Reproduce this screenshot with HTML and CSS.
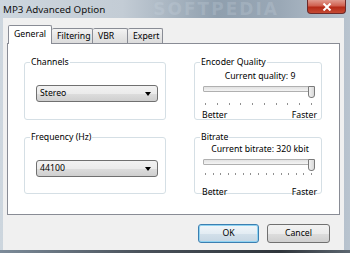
FILE: index.html
```html
<!DOCTYPE html>
<html lang="en">
<head>
  <meta charset="UTF-8">
  <title>MP3 Advanced Option</title>
  <link rel="stylesheet" href="styles.css">
</head>
<body>
  <div class="window">
    <div class="titlebar">
      <span class="title">MP3 Advanced Option</span>
      <span class="watermark">SOFTPEDIA</span>
      <div class="close-btn">
        <svg viewBox="0 0 10 8" width="10" height="8">
          <path d="M1.5 0.5 L8.5 7.5 M8.5 0.5 L1.5 7.5" stroke="#fff" stroke-width="2"/>
        </svg>
      </div>
    </div>

    <div class="client">
      <div class="tabs">
        <div class="tab active">General</div>
        <div class="tab">Filtering</div>
        <div class="tab">VBR</div>
        <div class="tab">Expert</div>
      </div>

      <div class="panel">
        <fieldset class="group">
          <legend>Channels</legend>
          <div class="select">
            <span>Stereo</span>
            <span class="arrow"></span>
          </div>
        </fieldset>

        <fieldset class="group">
          <legend>Encoder Quality</legend>
          <div class="slider-caption">Current quality: 9</div>
          <div class="slider">
            <div class="track"></div>
            <div class="thumb"></div>
          </div>
          <div class="ticks">
            <i></i><i></i><i></i><i></i><i></i><i></i><i></i><i></i><i></i><i></i>
          </div>
          <div class="slider-labels">
            <span>Better</span>
            <span>Faster</span>
          </div>
        </fieldset>

        <fieldset class="group">
          <legend>Frequency (Hz)</legend>
          <div class="select">
            <span>44100</span>
            <span class="arrow"></span>
          </div>
        </fieldset>

        <fieldset class="group bitrate">
          <legend>Bitrate</legend>
          <div class="slider-caption">Current bitrate: 320 kbit</div>
          <div class="slider">
            <div class="track"></div>
            <div class="thumb"></div>
          </div>
          <div class="ticks">
            <i></i><i></i><i></i><i></i><i></i><i></i><i></i><i></i><i></i><i></i><i></i><i></i><i></i><i></i><i></i>
          </div>
          <div class="slider-labels">
            <span>Better</span>
            <span>Faster</span>
          </div>
        </fieldset>
      </div>

      <div class="buttons">
        <div class="button default">OK</div>
        <div class="button">Cancel</div>
      </div>
    </div>
  </div>
</body>
</html>
```

FILE: styles.css
```css
* {
  margin: 0;
  padding: 0;
  box-sizing: border-box;
}

body {
  width: 350px;
  height: 253px;
  overflow: hidden;
  font-family: "Noto Sans", "Open Sans", sans-serif;
  font-size: 8.7px;
  color: #000;
}

.window {
  height: 253px;
  display: flex;
  flex-direction: column;
  background: linear-gradient(to right, #cdd6de 0%, #c3ccd5 35%, #8f9fae 62%, #9aa8b6 80%, #b9c4cf 100%);
}

/* bottom strip of the frame is darker */
.window::after {
  content: '';
  height: 3px;
  background: linear-gradient(to right, #7c8b99, #4a525b 40%, #2f353b 80%, #5c6670);
}

.titlebar {
  height: 18px;
  display: flex;
  align-items: flex-start;
  padding-left: 3px;
}

.title {
  font-size: 9.8px;
  line-height: 19px;
  color: #111;
}

.watermark {
  margin-left: 48px;
  font-family: "DejaVu Sans", sans-serif;
  font-weight: bold;
  font-size: 17px;
  line-height: 18px;
  letter-spacing: 2px;
  color: rgba(210, 220, 230, 0.22);
}

.close-btn {
  margin-left: auto;
  margin-right: 4px;
  width: 39px;
  height: 14px;
  border: 1px solid #6b2a2a;
  border-top: none;
  border-radius: 0 0 4px 4px;
  background: linear-gradient(to bottom, #e09a8e 0%, #d0604f 45%, #b52a17 55%, #c54a34 100%);
  display: flex;
  justify-content: center;
  align-items: center;
}

.client {
  flex: 1;
  margin: 0 6px 0 3px;
  background: #f0f0f0;
  display: flex;
  flex-direction: column;
}

.tabs {
  height: 25px;
  display: flex;
  align-items: flex-end;
  padding-left: 5px;
}

.tab {
  height: 15px;
  padding: 0 5px;
  line-height: 14px;
  border: 1px solid #898c95;
  border-bottom: none;
  border-left: none;
  background: linear-gradient(to bottom, #f3f3f3, #e6e6e6 50%, #dcdcdc);
  border-radius: 2px 2px 0 0;
}

.tab:nth-child(2) { width: 41px; }
.tab:nth-child(3) { width: 35px; }
.tab:nth-child(4) { width: 35px; }

.tab.active {
  width: 44px;
  height: 19px;
  margin-bottom: -1px;
  line-height: 17px;
  border-left: 1px solid #898c95;
  background: #fff;
  position: relative;
  z-index: 1;
}

.panel {
  height: 172px;
  margin: 0 4px;
  border: 1px solid #898c95;
  background: #fff;
  display: grid;
  grid-template-columns: 142px 128px;
  grid-template-rows: 64px 63px;
  column-gap: 28px;
  row-gap: 11px;
  padding: 12px 0 0 16px;
}

.group {
  border: 1px solid #d5dfe5;
  border-radius: 3px;
  padding: 0 7px 0 11px;
  min-width: 0;
}

.group legend {
  margin-left: -6px;
  padding: 0 1px;
  line-height: 13px;
}

.select {
  height: 17px;
  margin-top: 16px;
  border: 1px solid #707070;
  border-radius: 3px;
  background: linear-gradient(to bottom, #f2f2f2 0%, #ebebeb 50%, #dddddd 51%, #cfcfcf 100%);
  display: flex;
  align-items: center;
  justify-content: space-between;
  padding: 0 6px 0 3px;
  line-height: 15px;
}

.arrow {
  width: 0;
  height: 0;
  border-left: 3.5px solid transparent;
  border-right: 3.5px solid transparent;
  border-top: 4px solid #000;
}

.slider-caption {
  margin-top: 1px;
  text-align: center;
  line-height: 13px;
}

.slider {
  position: relative;
  height: 13px;
  margin-left: -3px;
  margin-right: -1px;
}

.track {
  margin-top: 3px;
  height: 6px;
  border: 1px solid #b0b0b0;
  border-radius: 1px;
  background: linear-gradient(to bottom, #e2e2e2, #f4f4f4);
}

.thumb {
  position: absolute;
  right: 0;
  top: 0;
  width: 7px;
  height: 12px;
  border: 1px solid #7a7a7a;
  border-radius: 1px 1px 3px 3px;
  background: linear-gradient(to right, #f2f2f2, #d8d8d8);
}

.ticks {
  display: flex;
  justify-content: space-between;
  margin: 4px 2px 0 -1px;
  height: 2px;
}

.ticks i {
  width: 1px;
  height: 2px;
  background: #909090;
}

.slider-labels {
  display: flex;
  justify-content: space-between;
  margin: 4px -3px 0 -4px;
  line-height: 12px;
}

.bitrate .slider-caption {
  margin-top: -1px;
}

.bitrate .ticks {
  margin-top: 1px;
}

.bitrate .slider-labels {
  margin-top: 11px;
}

.buttons {
  display: flex;
  justify-content: flex-end;
  gap: 8px;
  padding: 9px 14px 0 0;
}

.button {
  width: 63px;
  height: 19px;
  border: 1px solid #707070;
  border-radius: 3px;
  background: linear-gradient(to bottom, #f2f2f2 0%, #ebebeb 50%, #dddddd 51%, #cfcfcf 100%);
  text-align: center;
  line-height: 17px;
}

.button.default {
  width: 61px;
  border-color: #3c7fb1;
  box-shadow: inset 0 0 0 1px #8fd3f2;
  background: linear-gradient(to bottom, #f1f6fa 0%, #e3ecf3 50%, #d3e0ea 51%, #c6d6e3 100%);
}
```
